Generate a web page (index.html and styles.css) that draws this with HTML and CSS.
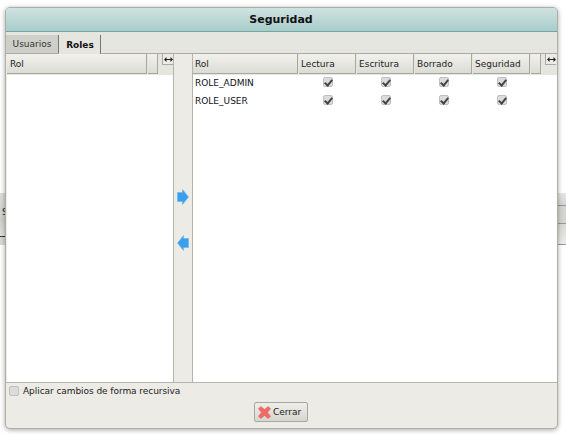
FILE: index.html
```html
<!DOCTYPE html>
<html lang="es">
<head>
<meta charset="utf-8">
<title>Seguridad</title>
<link rel="stylesheet" href="styles.css">
</head>
<body>
<div class="backdrop">
  <div class="side side-left"><span class="side-text">S</span></div>
  <div class="side side-right">
    <div class="strip"></div>
    <div class="strip strip-m"></div>
    <div class="strip strip-b"></div>
  </div>
</div>
<div class="window">
  <div class="titlebar">Seguridad</div>
  <div class="tabs">
    <div class="tab">Usuarios</div>
    <div class="tab active">Roles</div>
  </div>
  <div class="panes">
    <div class="grid left">
      <div class="ghead">
        <div class="th th-rol-l">Rol</div>
        <div class="th th-end"></div>
        <div class="resize"><svg width="9" height="7" viewBox="0 0 9 7"><path d="M0 3.5 2.5 1V3H6.5V1L9 3.5 6.5 6V4H2.5V6Z" fill="#222"/></svg></div>
      </div>
      <div class="gbody"></div>
    </div>
    <div class="mover">
      <svg class="arrow" width="12" height="16" viewBox="0 0 12 16"><path d="M0.5 3.5H5.5V0.5L11.5 8 5.5 15.5V12.5H0.5Z" fill="#3a9fee" stroke="#6ab5e8" stroke-width=".6"/></svg>
      <svg class="arrow" width="12" height="16" viewBox="0 0 12 16"><path d="M11.5 3.5H6.5V0.5L0.5 8 6.5 15.5V12.5H11.5Z" fill="#3a9fee" stroke="#6ab5e8" stroke-width=".6"/></svg>
    </div>
    <div class="grid right">
      <div class="ghead">
        <div class="th th-rol-r">Rol</div>
        <div class="th th-col">Lectura</div>
        <div class="th th-col">Escritura</div>
        <div class="th th-col">Borrado</div>
        <div class="th th-col">Seguridad</div>
        <div class="th th-end"></div>
        <div class="resize"><svg width="9" height="7" viewBox="0 0 9 7"><path d="M0 3.5 2.5 1V3H6.5V1L9 3.5 6.5 6V4H2.5V6Z" fill="#222"/></svg></div>
      </div>
      <div class="gbody">
        <div class="row">
          <div class="cell-name">ROLE_ADMIN</div>
          <div class="cell-check"><input type="checkbox" class="cb" checked></div>
          <div class="cell-check"><input type="checkbox" class="cb" checked></div>
          <div class="cell-check"><input type="checkbox" class="cb" checked></div>
          <div class="cell-check"><input type="checkbox" class="cb" checked></div>
        </div>
        <div class="row">
          <div class="cell-name">ROLE_USER</div>
          <div class="cell-check"><input type="checkbox" class="cb" checked></div>
          <div class="cell-check"><input type="checkbox" class="cb" checked></div>
          <div class="cell-check"><input type="checkbox" class="cb" checked></div>
          <div class="cell-check"><input type="checkbox" class="cb" checked></div>
        </div>
      </div>
    </div>
  </div>
  <div class="footer">
    <label class="recursive"><input type="checkbox" class="cb"><span>Aplicar cambios de forma recursiva</span></label>
    <div class="actions">
      <button class="btn" type="button"><svg width="13" height="13" viewBox="0 0 14 14"><path d="M3 0.5 7 3.8 11 0.5 13.5 3 10.2 7 13.5 11 11 13.5 7 10.2 3 13.5 0.5 11 3.8 7 0.5 3Z" fill="#f06a6a" stroke="#d9534f" stroke-width=".5"/></svg><span>Cerrar</span></button>
    </div>
  </div>
</div>
</body>
</html>
```
FILE: styles.css
```css
* { box-sizing: border-box; }
html, body { margin: 0; height: 100%; }
body {
  position: relative;
  width: 566px;
  height: 434px;
  overflow: hidden;
  background: #fff;
  font-family: "DejaVu Sans", sans-serif;
  font-size: 9px;
  color: #222;
}
.backdrop {
  position: absolute;
  left: 0;
  right: 0;
  top: 193px;
  height: 52px;
  display: flex;
  justify-content: space-between;
}
.side {
  width: 30px;
  display: flex;
  flex-direction: column;
}
.side-left {
  background: linear-gradient(#dcdcd8, #d0d0cc 60%, #e2e2de);
  border-bottom: 8px solid #d8d8d4;
  box-shadow: inset 0 -1px 0 #334;
  color: #222;
}
.side-text { padding: 14px 0 0 2px; font-size: 9px; }
.strip {
  height: 13px;
  background: linear-gradient(#e6e6e2, #d4d4d0);
  border-bottom: 1px solid #999;
}
.strip-m {
  height: 18px;
  background: #d4d4d0;
}
.strip-b {
  flex: 1;
  background: linear-gradient(#d8d8d4, #ecece8);
}
.window {
  position: absolute;
  left: 5px;
  top: 7px;
  width: 553px;
  height: 422px;
  display: flex;
  flex-direction: column;
  background: #edebe6;
  border: 1px solid #aeaea2;
  border-radius: 5px;
  box-shadow: 0 1px 5px rgba(0,0,0,.35);
  overflow: hidden;
}
.titlebar {
  height: 24px;
  flex: none;
  display: flex;
  align-items: center;
  justify-content: center;
  padding-right: 1px;
  background: linear-gradient(#d0e2e2, #a7cdca);
  border-bottom: 1px solid #74a5a3;
  font: bold 11px "DejaVu Sans", sans-serif;
  color: #111;
}
.tabs {
  height: 22px;
  flex: none;
  display: flex;
  align-items: flex-end;
  background: #e6e6e1;
  border-bottom: 1px solid #aaa;
}
.tab {
  height: 18px;
  width: 53px;
  display: flex;
  align-items: center;
  justify-content: center;
  background: #cfcfca;
  border-right: 1px solid #777;
  color: #333;
}
.tab.active {
  width: 42px;
  height: 19px;
  margin-bottom: -1px;
  padding-left: 1px;
  background: #e6e6e1;
  font-weight: bold;
  color: #111;
}
.panes {
  flex: 1;
  min-height: 0;
  display: flex;
  padding-left: 1px;
  border-bottom: 1px solid #b5b5b0;
}
.grid {
  background: #fff;
  display: flex;
  flex-direction: column;
}
.left { width: 166px; flex: none; }
.right { flex: 1; min-width: 0; overflow: hidden; }
.ghead {
  height: 21px;
  flex: none;
  display: flex;
  background: #e6e6e1;
}
.th {
  flex: none;
  height: 20px;
  display: flex;
  align-items: center;
  padding-left: 3px;
  background: linear-gradient(#f2f1ec, #dcdcd6);
  border-right: 1px solid #a8a89f;
  border-bottom: 1px solid #a8a89f;
  margin-right: 1px;
}
.right .th { padding-left: 2px; }
.th-rol-l { width: 140px; }
.th-rol-r { width: 105px; }
.th-col { width: 57px; }
.th-end { width: 10px; }
.resize {
  flex: none;
  width: 11px;
  height: 11px;
  margin-left: 3px;
  display: flex;
  align-items: center;
  justify-content: center;
  background: #ecebe6;
  border-left: 1px solid #aaa;
  border-bottom: 1px solid #aaa;
}
.gbody { flex: 1; }
.mover {
  width: 20px;
  flex: none;
  display: flex;
  flex-direction: column;
  align-items: center;
  gap: 30px;
  padding-top: 135px;
  background: #edebe6;
  border-left: 1px solid #b5b5b0;
  border-right: 1px solid #b5b5b0;
}
.row {
  height: 18px;
  display: flex;
  align-items: center;
  color: #112;
  position: relative;
  top: -1px;
}
.cell-name { width: 106px; padding-left: 2px; }
.cell-check {
  width: 58px;
  display: flex;
  justify-content: center;
  margin-top: -2px;
}
.cb {
  appearance: none;
  width: 10px;
  height: 10px;
  margin: 0;
  border: 1px solid #c0c0c0;
  border-radius: 2px;
  background: #dcdcdc;
  position: relative;
}
.cb:checked::after {
  content: "";
  position: absolute;
  left: 2px;
  top: 0;
  width: 3px;
  height: 6px;
  border-right: 2px solid #444;
  border-bottom: 2px solid #444;
  transform: rotate(40deg);
}
.footer {
  height: 45px;
  flex: none;
  display: flex;
  flex-direction: column;
  padding: 1px 0 0 3px;
}
.recursive {
  display: flex;
  align-items: center;
  gap: 4px;
  height: 13px;
  letter-spacing: -0.06px;
}
.actions {
  display: flex;
  justify-content: center;
  margin-top: 5px;
  padding-right: 4px;
}
.btn {
  width: 54px;
  height: 20px;
  padding: 0 0 0 3px;
  display: flex;
  align-items: center;
  justify-content: flex-start;
  gap: 2px;
  background: linear-gradient(#efeee9, #d6d5cf);
  border: 1px solid #a8a89f;
  border-radius: 2px;
  font: 9px "DejaVu Sans", sans-serif;
  color: #222;
}
```
